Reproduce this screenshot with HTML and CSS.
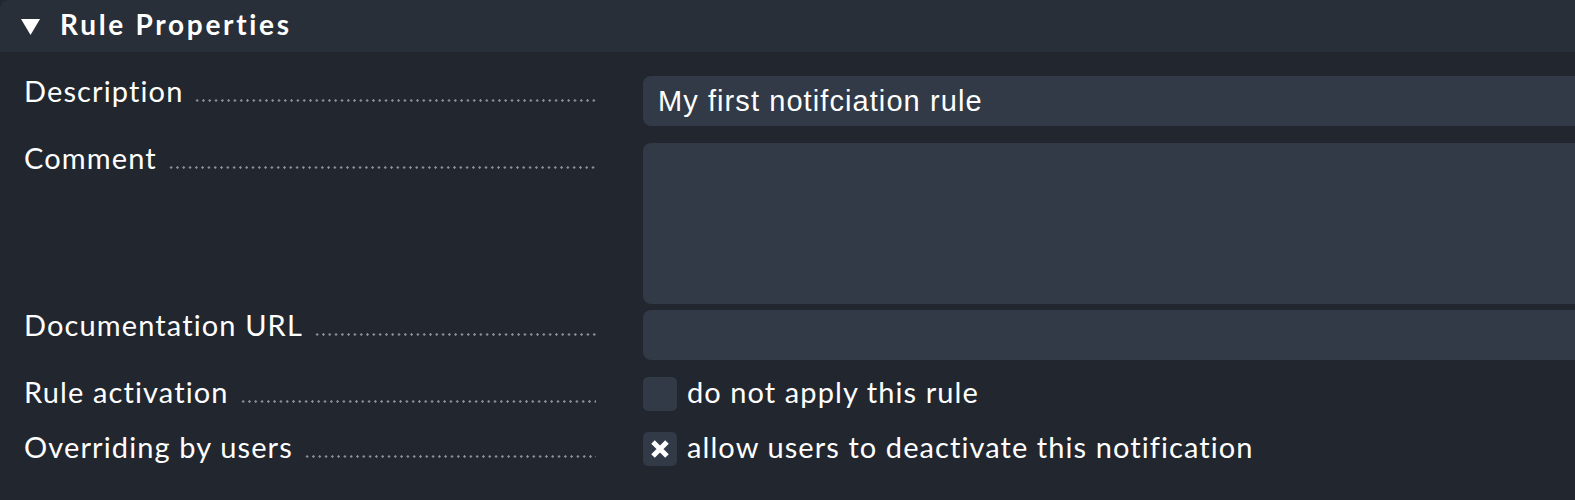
FILE: index.html
```html
<!DOCTYPE html>
<html lang="en">
<head>
<meta charset="utf-8">
<title>Rule Properties</title>
<link rel="stylesheet" href="styles.css">
</head>
<body>
<div class="section">
  <div class="section-header">
    <svg class="toggle" width="19" height="16" viewBox="0 0 19 16"><polygon points="0,0 19,0 9.5,16" fill="#ffffff"/></svg>
    <span class="section-title">Rule Properties</span>
  </div>
  <div class="form">
    <div class="row row-desc">
      <div class="label"><span class="label-text">Description</span><span class="leader"></span></div>
      <div class="field"><div class="input">My first notifciation rule</div></div>
    </div>
    <div class="row row-comment">
      <div class="label"><span class="label-text">Comment</span><span class="leader"></span></div>
      <div class="field"><div class="textarea"></div></div>
    </div>
    <div class="row row-url">
      <div class="label"><span class="label-text">Documentation URL</span><span class="leader"></span></div>
      <div class="field"><div class="input"></div></div>
    </div>
    <div class="row row-act">
      <div class="label"><span class="label-text">Rule activation</span><span class="leader"></span></div>
      <div class="field check-field"><span class="checkbox"></span><span class="check-text">do not apply this rule</span></div>
    </div>
    <div class="row row-over">
      <div class="label"><span class="label-text">Overriding by users</span><span class="leader"></span></div>
      <div class="field check-field"><span class="checkbox checked"><svg width="20" height="18" viewBox="0 0 20 18"><path d="M3 2 L17 16 M17 2 L3 16" stroke="#ffffff" stroke-width="5" stroke-linecap="butt"/></svg></span><span class="check-text">allow users to deactivate this notification</span></div>
    </div>
  </div>
</div>
</body>
</html>
```

FILE: styles.css
```css
html, body {
  margin: 0;
  padding: 0;
  background: #22272f;
  overflow: hidden;
}

body {
  width: 1575px;
  height: 500px;
  font-family: Lato, "Liberation Sans", sans-serif;
  color: #ffffff;
}

.section {
  background: #22272f;
  border-radius: 8px 0 0 8px;
  height: 500px;
  overflow: hidden;
}

.section-header {
  height: 52px;
  background: #282f39;
  border-radius: 8px 0 0 0;
  display: flex;
  align-items: center;
  padding-left: 21px;
  gap: 20px;
}

.toggle {
  display: block;
  margin-top: 2px;
}

.section-title {
  font-family: Lato, sans-serif;
  font-weight: 700;
  font-size: 28px;
  letter-spacing: 2.7px;
  margin-bottom: 5px;
}

.form {
  display: flex;
  flex-direction: column;
  padding-top: 24px;
}

.row {
  display: grid;
  grid-template-columns: 570px 1fr;
  column-gap: 49px;
  padding-left: 24px;
}

.row-comment { margin-top: 17px; }
.row-url { margin-top: 6px; }
.row-act { margin-top: 17px; }
.row-over { margin-top: 21px; }

.label {
  display: flex;
  align-items: baseline;
  font-size: 29px;
  line-height: 30px;
  letter-spacing: 1.12px;
}

.label-text {
  white-space: nowrap;
  margin-right: 11px;
}

.leader {
  flex: 1;
  display: inline-block;
  height: 3px;
  margin-right: -2px;
  background-image: radial-gradient(circle, #8a9099 1px, transparent 1.4px);
  background-size: 6.3px 3px;
  background-repeat: repeat-x;
}

.field {
  min-width: 0;
}

.input {
  height: 50px;
  background: #313a46;
  border-radius: 8px 0 0 8px;
  box-sizing: border-box;
  padding-left: 15px;
  font-family: "Liberation Sans", Arial, sans-serif;
  font-size: 29px;
  letter-spacing: 1.08px;
  line-height: 50px;
  white-space: nowrap;
}

.textarea {
  height: 161px;
  background: #313a46;
  border-radius: 8px 0 0 8px;
}

.check-field {
  display: flex;
  align-items: flex-start;
  gap: 10px;
  height: 34px;
}

.checkbox {
  width: 34px;
  height: 34px;
  flex: none;
  background: #313a46;
  border-radius: 5px;
  display: flex;
  align-items: center;
  justify-content: center;
}

.check-text {
  font-size: 29px;
  letter-spacing: 1.08px;
  line-height: 30px;
  white-space: nowrap;
}
```
